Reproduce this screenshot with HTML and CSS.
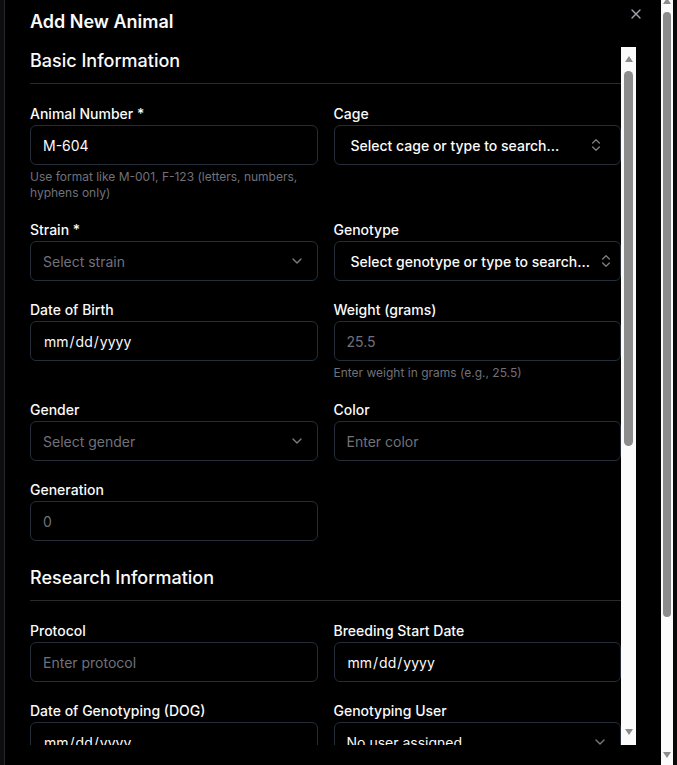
FILE: index.html
```html
<!DOCTYPE html>
<html lang="en">
<head>
    <meta charset="UTF-8">
    <meta name="viewport" content="width=device-width, initial-scale=1.0">
    <title>Add New Animal</title>
    <link rel="stylesheet" href="styles.css">
</head>
<body>
    <div class="backdrop"></div>

    <div class="dialog">
        <h2 class="dialog-title">Add New Animal</h2>
        <button class="close-btn" type="button" aria-label="Close">
            <svg viewBox="0 0 24 24" fill="none" stroke="currentColor" stroke-width="2" stroke-linecap="round" stroke-linejoin="round"><path d="M18 6 6 18"/><path d="m6 6 12 12"/></svg>
        </button>

        <div class="dialog-scroll">
            <form class="form-body">
                <section class="form-section">
                    <h3>Basic Information</h3>
                    <div class="form-grid">
                        <div class="field">
                            <label for="animalNumber">Animal Number *</label>
                            <input class="input" type="text" id="animalNumber" value="M-604">
                            <p class="hint">Use format like M-001, F-123 (letters, numbers, hyphens only)</p>
                        </div>
                        <div class="field">
                            <label>Cage</label>
                            <button class="input select combobox" type="button">
                                <span>Select cage or type to search...</span>
                                <svg class="chev" viewBox="0 0 24 24" fill="none" stroke="currentColor" stroke-width="2" stroke-linecap="round" stroke-linejoin="round"><path d="m7 15 5 5 5-5"/><path d="m7 9 5-5 5 5"/></svg>
                            </button>
                        </div>

                        <div class="field">
                            <label>Strain *</label>
                            <button class="input select" type="button">
                                <span class="placeholder">Select strain</span>
                                <svg class="chev" viewBox="0 0 24 24" fill="none" stroke="currentColor" stroke-width="2" stroke-linecap="round" stroke-linejoin="round"><path d="m6 9 6 6 6-6"/></svg>
                            </button>
                        </div>
                        <div class="field">
                            <label>Genotype</label>
                            <button class="input select combobox" type="button">
                                <span>Select genotype or type to search...</span>
                                <svg class="chev" viewBox="0 0 24 24" fill="none" stroke="currentColor" stroke-width="2" stroke-linecap="round" stroke-linejoin="round"><path d="m7 15 5 5 5-5"/><path d="m7 9 5-5 5 5"/></svg>
                            </button>
                        </div>

                        <div class="field">
                            <label for="dob">Date of Birth</label>
                            <input class="input" type="date" id="dob">
                        </div>
                        <div class="field">
                            <label for="weight">Weight (grams)</label>
                            <input class="input" type="number" id="weight" placeholder="25.5">
                            <p class="hint">Enter weight in grams (e.g., 25.5)</p>
                        </div>

                        <div class="field">
                            <label>Gender</label>
                            <button class="input select" type="button">
                                <span class="placeholder">Select gender</span>
                                <svg class="chev" viewBox="0 0 24 24" fill="none" stroke="currentColor" stroke-width="2" stroke-linecap="round" stroke-linejoin="round"><path d="m6 9 6 6 6-6"/></svg>
                            </button>
                        </div>
                        <div class="field">
                            <label for="color">Color</label>
                            <input class="input" type="text" id="color" placeholder="Enter color">
                        </div>

                        <div class="field">
                            <label for="generation">Generation</label>
                            <input class="input" type="number" id="generation" placeholder="0">
                        </div>
                    </div>
                </section>

                <section class="form-section">
                    <h3>Research Information</h3>
                    <div class="form-grid">
                        <div class="field">
                            <label for="protocol">Protocol</label>
                            <input class="input" type="text" id="protocol" placeholder="Enter protocol">
                        </div>
                        <div class="field">
                            <label for="breedingStart">Breeding Start Date</label>
                            <input class="input" type="date" id="breedingStart">
                        </div>

                        <div class="field">
                            <label for="dog">Date of Genotyping (DOG)</label>
                            <input class="input" type="date" id="dog">
                        </div>
                        <div class="field">
                            <label>Genotyping User</label>
                            <button class="input select" type="button">
                                <span>No user assigned</span>
                                <svg class="chev" viewBox="0 0 24 24" fill="none" stroke="currentColor" stroke-width="2" stroke-linecap="round" stroke-linejoin="round"><path d="m6 9 6 6 6-6"/></svg>
                            </button>
                        </div>
                    </div>
                </section>
            </form>

            <div class="vscroll">
                <svg class="arrow" viewBox="0 0 8 6"><polygon points="4,0 8,6 0,6"/></svg>
                <div class="thumb inner-thumb"></div>
                <div class="spacer"></div>
                <svg class="arrow" viewBox="0 0 8 6"><polygon points="0,0 8,0 4,6"/></svg>
            </div>
        </div>
    </div>

    <div class="page-scroll">
        <svg class="arrow top-arrow" viewBox="0 0 8 6"><polygon points="4,0 8,6 0,6"/></svg>
        <div class="thumb page-thumb"></div>
        <div class="spacer"></div>
        <svg class="arrow" viewBox="0 0 8 6"><polygon points="0,0 8,0 4,6"/></svg>
    </div>
    <div class="edge"></div>
</body>
</html>
```

FILE: styles.css
```css
* {
    box-sizing: border-box;
}

body {
    margin: 0;
    height: 765px;
    display: flex;
    overflow: hidden;
    background: #000;
    color: #fafafa;
    font-family: Inter, 'Noto Sans', sans-serif;
}

.backdrop {
    width: 4px;
    background: #0e0e10;
}

.dialog {
    flex: 1;
    min-width: 0;
    position: relative;
    display: flex;
    flex-direction: column;
    border-left: 1px solid #27272a;
    padding: 8px 25px 20px 25px;
    background: #000;
}

.dialog-title {
    margin: 0 0 11px;
    font-size: 18px;
    line-height: 28px;
    font-weight: 600;
}

.close-btn {
    position: absolute;
    top: 6px;
    right: 17px;
    width: 16px;
    height: 16px;
    padding: 0;
    border: none;
    background: none;
    color: #a1a1aa;
    cursor: pointer;
}

.close-btn svg {
    display: block;
    width: 16px;
    height: 16px;
}

.dialog-scroll {
    flex: 1;
    min-height: 0;
    display: flex;
}

.form-body {
    flex: 1;
    min-width: 0;
    margin: 0;
    overflow: hidden;
}

.form-section + .form-section {
    margin-top: 23px;
}

.form-section h3 {
    margin: 0 0 23px;
    padding-bottom: 8px;
    border-bottom: 1px solid #2a2a2c;
    font-size: 18px;
    line-height: 28px;
    font-weight: 500;
}

.form-grid {
    display: grid;
    grid-template-columns: minmax(0, 1fr) minmax(0, 1fr);
    column-gap: 16px;
    row-gap: 22px;
    align-items: start;
}

.field label {
    display: block;
    margin-bottom: 4px;
    font-size: 14px;
    line-height: 14px;
    font-weight: 500;
}

.input {
    display: block;
    width: 100%;
    height: 40px;
    padding: 0 12px;
    border: 1px solid #252d39;
    border-radius: 6px;
    background: transparent;
    color: #fafafa;
    font-family: inherit;
    font-size: 14px;
    outline: none;
    color-scheme: dark;
}

.input::placeholder {
    color: #71717a;
}

.input::-webkit-calendar-picker-indicator {
    display: none;
}

.input::-webkit-inner-spin-button,
.input::-webkit-outer-spin-button {
    -webkit-appearance: none;
    margin: 0;
}

.select {
    display: flex;
    align-items: center;
    justify-content: space-between;
    text-align: left;
    white-space: nowrap;
    cursor: pointer;
}

.select span {
    flex-shrink: 0;
}

.combobox {
    padding: 0 16px;
    font-weight: 500;
}

.placeholder {
    color: #71717a;
}

.chev {
    width: 16px;
    height: 16px;
    flex-shrink: 0;
    margin-left: 8px;
    opacity: 0.5;
}

.hint {
    margin: 4px 0 0;
    font-size: 12px;
    line-height: 16px;
    color: #71717a;
}

/* scrollbars */
.vscroll {
    width: 15px;
    display: flex;
    flex-direction: column;
    align-items: center;
    padding: 9px 0 10px;
    background: #fbfbfb;
}

.page-scroll {
    width: 12px;
    display: flex;
    flex-direction: column;
    align-items: center;
    padding-bottom: 7px;
    background: #fbfbfb;
}

.arrow {
    width: 8px;
    height: 6px;
    flex-shrink: 0;
    fill: #8c8c8c;
}

.top-arrow {
    margin-top: -2px;
}

.thumb {
    background: #8c8c8c;
    border-radius: 5px;
}

.inner-thumb {
    width: 9px;
    height: 375px;
    margin-top: 9px;
}

.page-thumb {
    width: 8px;
    height: 605px;
    margin-top: 8px;
}

.spacer {
    flex: 1;
}

.edge {
    width: 4px;
    background: #0a0a0a;
}
```
